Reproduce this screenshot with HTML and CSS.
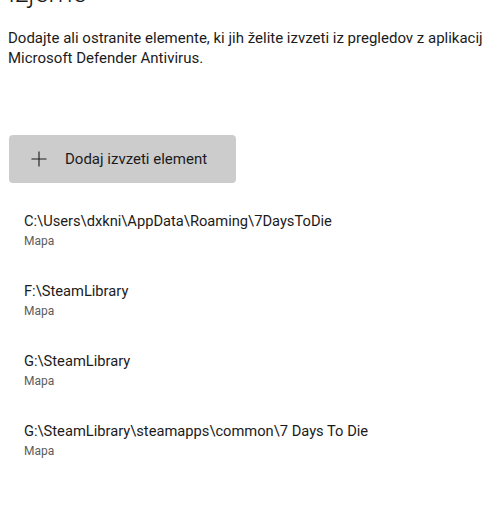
FILE: index.html
```html
<!DOCTYPE html>
<html lang="sl">
  <head>
    <meta charset="UTF-8" />
    <meta name="viewport" content="width=device-width, initial-scale=1.0" />
    <title>Izjeme</title>
    <link rel="stylesheet" href="styles.css">
  </head>
  <body>
    <div class="page">
      <header>
        <h1>Izjeme</h1>
        <p>Dodajte ali ostranite elemente, ki jih želite izvzeti iz pregledov z aplikacijo Microsoft Defender Antivirus.</p>
      </header>

      <button class="add-button">
        <svg class="plus" width="16" height="16" viewBox="0 0 16 16">
          <path d="M8 0.5V15.5M0.5 8H15.5" stroke="#1a1a1a" stroke-width="1.1" fill="none" />
        </svg>
        <span>Dodaj izvzeti element</span>
      </button>

      <ul class="exclusions">
        <li>
          <div class="path">C:\Users\dxkni\AppData\Roaming\7DaysToDie</div>
          <div class="kind">Mapa</div>
        </li>
        <li>
          <div class="path">F:\SteamLibrary</div>
          <div class="kind">Mapa</div>
        </li>
        <li>
          <div class="path">G:\SteamLibrary</div>
          <div class="kind">Mapa</div>
        </li>
        <li>
          <div class="path">G:\SteamLibrary\steamapps\common\7 Days To Die</div>
          <div class="kind">Mapa</div>
        </li>
      </ul>
    </div>
  </body>
</html>
```

FILE: styles.css
```css
body {
  font-family: Roboto, "Open Sans", sans-serif;
  margin: 0;
  padding: 0;
  background-color: #ffffff;
  color: #1b1b1b;
  overflow: hidden;
}

.page {
  width: 530px;
  padding: 0 0 0 8px;
  box-sizing: border-box;
}

header h1 {
  font-size: 27px;
  font-weight: 300;
  line-height: 36px;
  margin: -25px 0 0 0;
}

header p {
  font-size: 15px;
  line-height: 20px;
  margin: 17px 0 0 0;
}

.add-button {
  display: flex;
  align-items: center;
  width: 227px;
  height: 48px;
  margin: 67px 0 0 1px;
  padding: 0 0 0 22px;
  border: none;
  border-radius: 4px;
  background-color: #cccccc;
  color: #1b1b1b;
  font-family: inherit;
  font-size: 15px;
  cursor: pointer;
}

.add-button .plus {
  margin-right: 18px;
}

.exclusions {
  list-style: none;
  margin: 28px 0 0 0;
  padding: 0 0 0 16px;
}

.exclusions li {
  height: 70px;
}

.path {
  font-size: 14.7px;
  line-height: 20px;
}

.kind {
  font-size: 12px;
  line-height: 20px;
  color: #5d5d5d;
}
```
